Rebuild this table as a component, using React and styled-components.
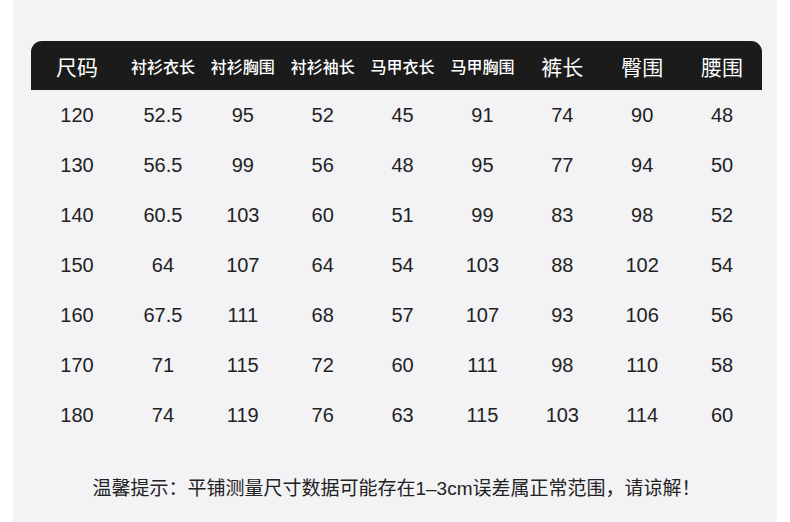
import styled, { createGlobalStyle } from 'styled-components';

const GlobalStyle = createGlobalStyle`
  html, body {
    margin: 0;
    padding: 0;
    background: #ffffff;
  }
  body {
    font-family: "Liberation Sans", "Noto Sans CJK SC", sans-serif;
  }
`;

const Page = styled.div`
  width: 790px;
  height: 522px;
  padding: 0 13px;
  box-sizing: border-box;
  background: #ffffff;
  overflow: hidden;
`;

const Panel = styled.div`
  height: 100%;
  background: #f3f3f5;
  padding: 41px 15px 0 18px;
  box-sizing: border-box;
  display: flex;
  flex-direction: column;
`;

const Table = styled.div`
  display: grid;
  grid-template-columns: 92px repeat(8, 1fr);
`;

const HeadCell = styled.div`
  height: 49px;
  background: #1b1b1b;
  color: #ffffff;
  display: flex;
  align-items: center;
  justify-content: center;
  font-family: "Noto Sans CJK SC", sans-serif;
  font-weight: ${p => (p.$big ? 400 : 500)};
  font-size: ${p => (p.$big ? '21px' : '16px')};
  white-space: nowrap;
  &:first-child {
    border-top-left-radius: 11px;
  }
  &:nth-child(9) {
    border-top-right-radius: 11px;
  }
`;

const Cell = styled.div`
  height: 50px;
  display: flex;
  align-items: center;
  justify-content: center;
  font-size: 20px;
  color: #222222;
`;

const Note = styled.p`
  margin: 37px 0 0;
  text-align: center;
  font-family: "Liberation Sans", "Noto Sans CJK SC", sans-serif;
  font-size: 19px;
  line-height: 24px;
  color: #222222;
`;

const headers = [
  { label: '尺码', big: true },
  { label: '衬衫衣长' },
  { label: '衬衫胸围' },
  { label: '衬衫袖长' },
  { label: '马甲衣长' },
  { label: '马甲胸围' },
  { label: '裤长', big: true },
  { label: '臀围', big: true },
  { label: '腰围', big: true },
];

const rows = [
  ['120', '52.5', '95', '52', '45', '91', '74', '90', '48'],
  ['130', '56.5', '99', '56', '48', '95', '77', '94', '50'],
  ['140', '60.5', '103', '60', '51', '99', '83', '98', '52'],
  ['150', '64', '107', '64', '54', '103', '88', '102', '54'],
  ['160', '67.5', '111', '68', '57', '107', '93', '106', '56'],
  ['170', '71', '115', '72', '60', '111', '98', '110', '58'],
  ['180', '74', '119', '76', '63', '115', '103', '114', '60'],
];

export default function App() {
  return (
    <Page>
      <GlobalStyle />
      <Panel>
        <Table>
          {headers.map(h => (
            <HeadCell key={h.label} $big={h.big}>{h.label}</HeadCell>
          ))}
          {rows.map(r =>
            r.map((v, i) => <Cell key={r[0] + '-' + i}>{v}</Cell>)
          )}
        </Table>
        <Note>温馨提示：平铺测量尺寸数据可能存在1–3cm误差属正常范围，请谅解！</Note>
      </Panel>
    </Page>
  );
}
